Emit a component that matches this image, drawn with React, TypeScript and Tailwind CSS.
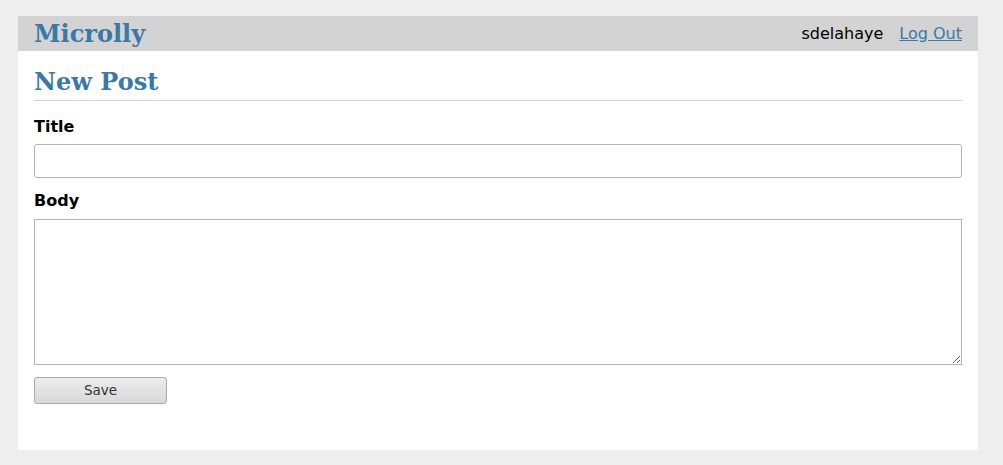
export default function App() {
	return (
		<div className="min-h-[465px] bg-[#eeeeee] pt-4 pl-[18px] pb-[15px] font-['DejaVu_Sans',sans-serif]">
			<div className="w-[960px] h-[434px] bg-white">
				<header className="flex h-[35px] items-center justify-between bg-[#d3d3d3] px-4">
					<a className="font-['DejaVu_Serif',serif] text-[24px] font-bold leading-none text-[#3a78a6]">
						Microlly
					</a>
					<div className="flex items-center gap-4 text-[16px] leading-none">
						<span className="text-black">sdelahaye</span>
						<a href="#" className="text-[#3a7aa8] underline">
							Log Out
						</a>
					</div>
				</header>
				<main className="px-4 pt-4">
					<h1 className="border-b border-[#d3d3d3] pb-[3px] font-['DejaVu_Serif',serif] text-[24px] font-bold leading-[30px] text-[#3a78a6]">
						New Post
					</h1>
					<form className="flex flex-col">
						<label className="mt-4 text-[16px] font-bold leading-[20px] text-black">Title</label>
						<input
							type="text"
							className="mt-[7px] h-[34px] w-full rounded-[3px] border border-[#b4b4b4] px-2 outline-none"
						/>
						<label className="mt-[13px] text-[16px] font-bold leading-[20px] text-black">Body</label>
						<textarea className="mt-[8px] h-[146px] w-full border border-[#b4b4b4] px-2 outline-none" />
						<div className="mt-3">
							<button
								type="button"
								className="h-[27px] w-[133px] rounded-[3px] border border-[#aaaaaa] bg-gradient-to-b from-[#ececec] to-[#d8d8d8] text-[13.5px] text-[#333333]"
							>
								Save
							</button>
						</div>
					</form>
				</main>
			</div>
		</div>
	);
}
